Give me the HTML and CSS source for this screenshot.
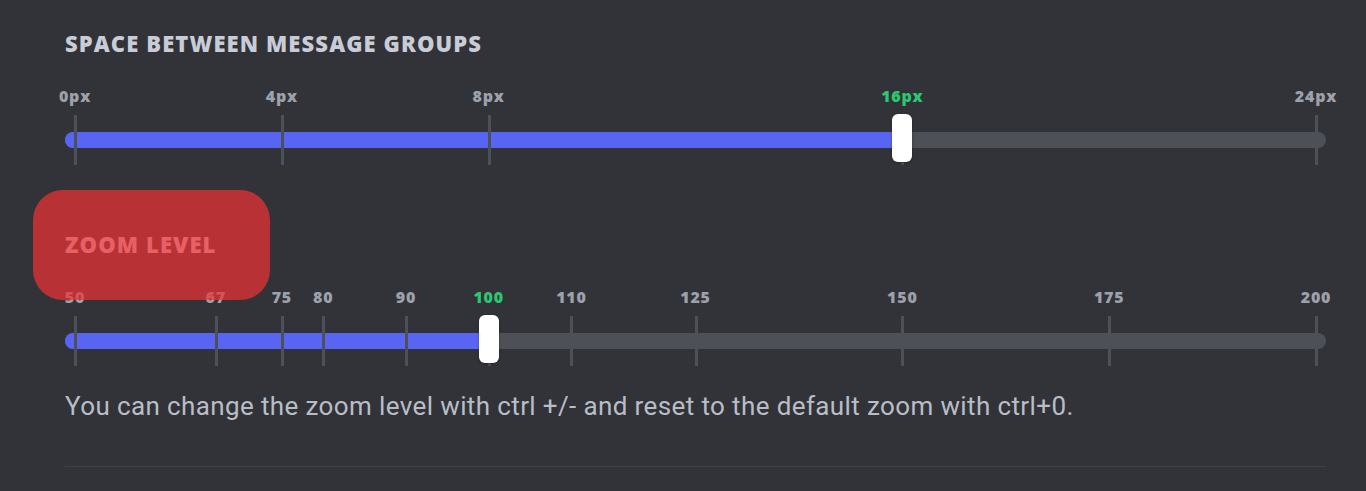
FILE: index.html
```html
<!DOCTYPE html>
<html lang="en">
<head>
<meta charset="utf-8">
<title>Appearance settings</title>
<link rel="stylesheet" href="styles.css">
</head>
<body>
<main class="page">
  <section class="group">
    <h2 class="title">Space between message groups</h2>
    <div class="slider">
      <div class="track"><div class="fill" style="width: calc(10px + (100% - 20px) * 0.6667)"></div></div>
      <div class="marks">
        <div class="mark" style="left: 0%"><span class="label">0px</span><span class="tick"></span></div>
        <div class="mark" style="left: 16.667%"><span class="label">4px</span><span class="tick"></span></div>
        <div class="mark" style="left: 33.333%"><span class="label">8px</span><span class="tick"></span></div>
        <div class="mark active" style="left: 66.667%"><span class="label">16px</span><span class="tick"></span></div>
        <div class="mark" style="left: 100%"><span class="label">24px</span><span class="tick"></span></div>
        <div class="knob" style="left: 66.667%"></div>
      </div>
    </div>
  </section>

  <section class="group">
    <h2 class="title">Zoom level</h2>
    <div class="slider">
      <div class="track"><div class="fill" style="width: calc(10px + (100% - 20px) * 0.3333)"></div></div>
      <div class="marks">
        <div class="mark" style="left: 0%"><span class="label">50</span><span class="tick"></span></div>
        <div class="mark" style="left: 11.333%"><span class="label">67</span><span class="tick"></span></div>
        <div class="mark" style="left: 16.667%"><span class="label">75</span><span class="tick"></span></div>
        <div class="mark" style="left: 20%"><span class="label">80</span><span class="tick"></span></div>
        <div class="mark" style="left: 26.667%"><span class="label">90</span><span class="tick"></span></div>
        <div class="mark active" style="left: 33.333%"><span class="label">100</span><span class="tick"></span></div>
        <div class="mark" style="left: 40%"><span class="label">110</span><span class="tick"></span></div>
        <div class="mark" style="left: 50%"><span class="label">125</span><span class="tick"></span></div>
        <div class="mark" style="left: 66.667%"><span class="label">150</span><span class="tick"></span></div>
        <div class="mark" style="left: 83.333%"><span class="label">175</span><span class="tick"></span></div>
        <div class="mark" style="left: 100%"><span class="label">200</span><span class="tick"></span></div>
        <div class="knob" style="left: 33.333%"></div>
      </div>
    </div>
    <p class="hint">You can change the zoom level with ctrl +/- and reset to the default zoom with ctrl+0.</p>
    <hr class="divider">
  </section>
  <div class="redact"></div>
</main>
</body>
</html>
```

FILE: styles.css
```css
* { box-sizing: border-box; }

html, body {
  margin: 0;
  padding: 0;
  background: #313338;
  height: 100%;
  overflow: hidden;
}

.page {
  position: relative;
  width: 1261px;
  margin-left: 65px;
  padding-top: 31px;
  display: flex;
  flex-direction: column;
  gap: 66px;
}

.group {
  display: flex;
  flex-direction: column;
}

.title {
  margin: 0 0 31px;
  font-family: "Open Sans", "Noto Sans", sans-serif;
  font-weight: 800;
  font-size: 22px;
  line-height: 24px;
  text-transform: uppercase;
  color: #c8ccd6;
  letter-spacing: 1.1px;
}

.slider {
  position: relative;
  height: 80px;
}

.track {
  position: absolute;
  left: 0;
  right: 0;
  top: 46px;
  height: 16px;
  border-radius: 8px;
  background: #4e5058;
  overflow: hidden;
}

.fill {
  height: 100%;
  background: #5865f2;
}

.marks {
  position: absolute;
  left: 10px;
  right: 10px;
  top: 0;
  bottom: 0;
}

.mark {
  position: absolute;
  top: 0;
  width: 0;
  height: 80px;
}

.label {
  position: absolute;
  top: 0;
  left: 0;
  transform: translateX(-50%);
  font-family: "Open Sans", "Noto Sans", sans-serif;
  font-weight: 800;
  font-size: 16px;
  line-height: 20px;
  letter-spacing: 0.8px;
  color: #9ca1ab;
  white-space: nowrap;
}

.mark.active .label {
  color: #2dc770;
}

.tick {
  position: absolute;
  top: 29px;
  left: -1px;
  width: 3px;
  height: 50px;
  background: #4e5058;
}

.knob {
  position: absolute;
  top: 28px;
  width: 20px;
  height: 48px;
  margin-left: -10px;
  border-radius: 6px;
  background: #ffffff;
  box-shadow: 0 1px 3px rgba(0, 0, 0, 0.3);
}

.hint {
  margin: 24px 0 0;
  font-family: Roboto, "Noto Sans", sans-serif;
  font-size: 26px;
  line-height: 30px;
  letter-spacing: 0.38px;
  color: #b9bec6;
}

.divider {
  margin: 45px 0 0;
  border: 0;
  height: 1px;
  background: #3f4147;
}

.redact {
  position: absolute;
  left: -32px;
  top: 190px;
  width: 237px;
  height: 110px;
  border-radius: 30px;
  background: rgba(242, 50, 53, 0.7);
}
```
